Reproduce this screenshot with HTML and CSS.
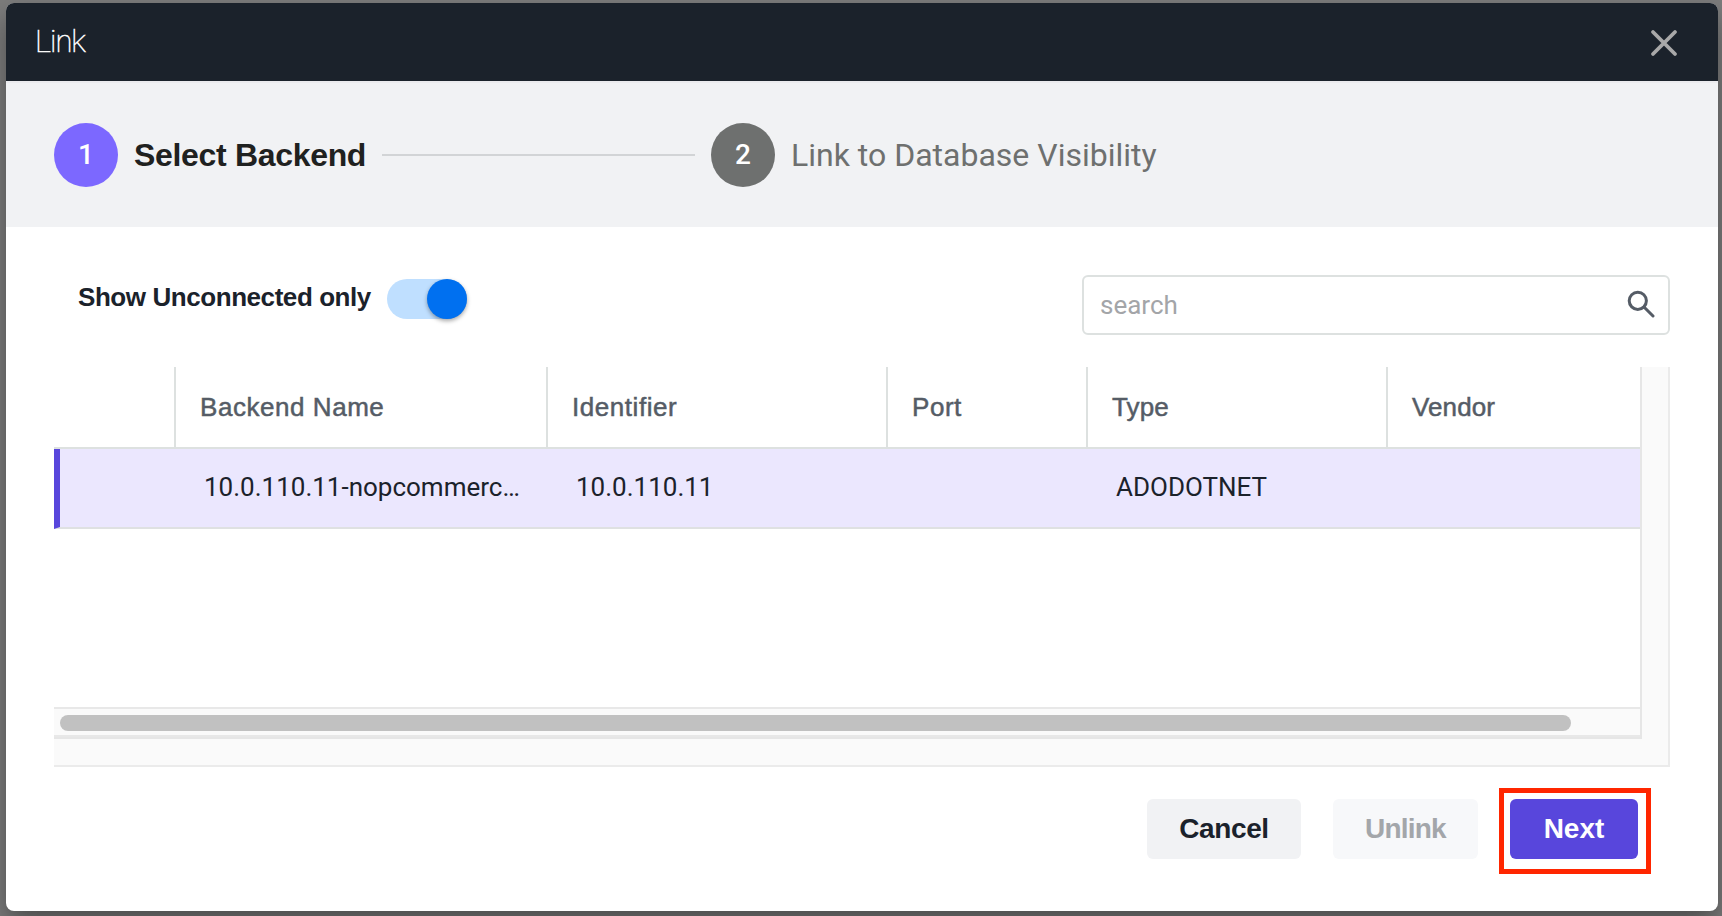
FILE: index.html
```html
<!DOCTYPE html>
<html lang="en">
<head>
<meta charset="utf-8">
<title>Link</title>
<link rel="stylesheet" href="styles.css">
</head>
<body>
<div class="dialog" role="dialog">
  <header class="dialog-header">
    <h1 class="dialog-title">Link</h1>
    <svg class="close" width="28" height="28" viewBox="0 0 28 28"><path d="M3 3 25 25M25 3 3 25"/></svg>
  </header>
  <nav class="stepper">
    <span class="step-number active">1</span>
    <span class="step-label active">Select Backend</span>
    <span class="step-line"></span>
    <span class="step-number">2</span>
    <span class="step-label">Link to Database Visibility</span>
  </nav>
  <main class="content">
    <div class="toolbar">
      <div class="filter">
        <span class="filter-label">Show Unconnected only</span>
        <span class="toggle"><span class="knob"></span></span>
      </div>
      <div class="search">
        <span class="placeholder">search</span>
        <svg class="search-icon" width="28" height="28" viewBox="0 0 28 28"><circle cx="10.8" cy="10.8" r="8.6"/><path d="M17 17 26 26"/></svg>
      </div>
    </div>
    <div class="scroll-area">
      <div class="grid">
        <div class="row head">
          <span class="cell"></span><span class="cell">Backend Name</span><span class="cell">Identifier</span><span class="cell">Port</span><span class="cell tight">Type</span><span class="cell tight">Vendor</span>
        </div>
        <div class="row selected">
          <span class="cell"></span><span class="cell">10.0.110.11-nopcommerc…</span><span class="cell">10.0.110.11</span><span class="cell"></span><span class="cell">ADODOTNET</span><span class="cell"></span>
        </div>
        <div class="empty"></div>
        <div class="scrollbar"><div class="thumb"></div></div>
      </div>
    </div>
    <footer class="actions">
      <span class="button cancel">Cancel</span>
      <span class="button unlink">Unlink</span>
      <span class="highlight"><span class="button next">Next</span></span>
    </footer>
  </main>
</div>
</body>
</html>
```
FILE: styles.css
```css
* { box-sizing: border-box; }
body {
  margin: 0;
  height: 916px;
  padding: 3px 4px 5px 6px;
  overflow: hidden;
  background: #7c7c7c;
  font-family: "Liberation Sans", Arial, sans-serif;
}
.dialog {
  height: 908px;
  border-radius: 8px;
  background: #fff;
  box-shadow: 0 14px 28px rgba(0, 0, 0, .38);
  overflow: hidden;
}
.dialog-header {
  height: 80px;
  padding: 0 40px 0 29px;
  display: flex;
  align-items: center;
  justify-content: space-between;
  background: #1b222b;
  border-bottom: 2px solid #ebebee;
}
.dialog-title {
  margin: 0;
  font: 100 31px/36px Roboto, sans-serif;
  letter-spacing: -1px;
  color: #fff;
  -webkit-text-stroke: .5px #fff;
}
.close { fill: none; stroke: #a9a9a9; stroke-width: 3.8; stroke-linecap: round; margin-top: 2px; }
.stepper {
  height: 144px;
  padding-left: 48px;
  display: flex;
  align-items: center;
  background: #f1f2f4;
}
.step-number {
  width: 64px;
  height: 64px;
  border-radius: 50%;
  background: #6e706f;
  color: #fff;
  font: 500 28px/64px Roboto, sans-serif;
  text-align: center;
}
.step-number.active { background: #7c68ff; }
.step-label {
  margin-left: 16px;
  font: 400 32px/32px Roboto, sans-serif;
  color: #6e706f;
  white-space: nowrap;
}
.step-label.active {
  width: 232px;
  font: 700 32px/32px "Liberation Sans", Arial, sans-serif;
  letter-spacing: -.32px;
  color: #1f2120;
}
.step-line { width: 313px; height: 2px; margin: 0 16px; background: #d2d4d6; }
.content { padding: 48px 48px 0; }
.toolbar { display: flex; justify-content: space-between; height: 92px; }
.filter { display: flex; padding: 4px 0 0 24px; }
.filter-label {
  width: 309px;
  font-weight: 700;
  font-size: 26px;
  line-height: 36px;
  letter-spacing: -.43px;
  color: #1b222b;
  white-space: nowrap;
}
.toggle { width: 80px; height: 40px; border-radius: 20px; background: #bfdfff; display: flex; justify-content: flex-end; }
.knob { width: 40px; height: 40px; border-radius: 50%; background: #0070f0; box-shadow: 0 2px 4px rgba(0, 0, 0, .35); }
.search {
  width: 588px;
  height: 60px;
  padding: 0 13px 2px 16px;
  display: flex;
  align-items: center;
  justify-content: space-between;
  border: 2px solid #dde1e0;
  border-radius: 6px;
}
.placeholder { padding-top: 2px; font: 400 26px/36px Roboto, sans-serif; color: #a3a5a8; }
.search-icon { fill: none; stroke: #555c66; stroke-width: 3; stroke-linecap: round; }
.scroll-area {
  height: 400px;
  width: 1616px;
  border: solid #ebebeb;
  border-width: 0 2px 2px 0;
  background: #fafafa;
}
.grid {
  width: 1588px;
  height: 372px;
  background: #fff;
  border: solid #e6e6e6;
  border-width: 0 2px 2px 0;
}
.row {
  display: grid;
  grid-template-columns: 122px 372px 340px 200px 300px 1fr;
  height: 80px;
  border-bottom: 2px solid #dfe1e2;
}
.row.head { height: 82px; border-bottom-color: #dde1e0; }
.cell { padding-left: 28px; white-space: nowrap; font: 400 26px/76px Roboto, sans-serif; color: #1b222b; }
.head .cell {
  padding-left: 24px;
  border-right: 2px solid #dde1e0;
  font-family: "Liberation Sans", Arial, sans-serif;
  line-height: 81px;
  letter-spacing: .55px;
  color: #555c66;
  -webkit-text-stroke: .5px #555c66;
}
.head .cell.tight { letter-spacing: .1px; }
.head .cell:last-child { border-right: 0; }
.row.selected { background: #ebe7fe; border-left: 6px solid #5846dc; grid-template-columns: 116px 372px 340px 200px 300px 1fr; }
.empty { height: 178px; }
.scrollbar { height: 30px; padding: 6px; background: #fafafa; border: solid #e8e8e8; border-width: 2px 0; }
.thumb { width: 1511px; height: 16px; border-radius: 8px; background: #c1c1c1; }
.actions { display: flex; justify-content: flex-end; padding: 21px 19px 0 0; }
.button {
  height: 60px;
  border-radius: 6px;
  font-weight: 700;
  font-size: 28px;
  line-height: 59px;
  text-align: center;
}
.cancel { width: 154px; margin: 11px 32px 0 0; background: #f1f2f4; color: #1b222b; letter-spacing: -.4px; }
.unlink { width: 145px; margin: 11px 21px 0 0; background: #f7f8fa; color: #a3a6aa; letter-spacing: -.8px; }
.highlight { width: 152px; height: 86px; padding: 6px; border: 5px solid #ff2600; }
.next { display: block; width: 128px; background: #5846dc; color: #fff; }
```
